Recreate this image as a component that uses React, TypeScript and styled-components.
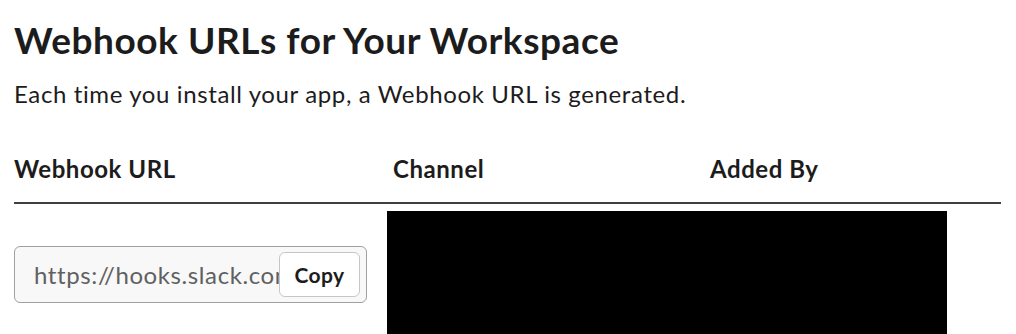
import React from "react";
import styled, { createGlobalStyle } from "styled-components";

const Global = createGlobalStyle`
  html, body { margin: 0; padding: 0; background: #fff; }
  body { font-family: Lato, "Noto Sans", sans-serif; color: #1d1c1d; }
`;

const Page = styled.div`
  padding: 17px 15px 0 14px;
  width: 1016px;
  box-sizing: border-box;
  height: 334px;
  overflow: hidden;
`;

const Title = styled.h1`
  margin: 0;
  font-size: 37px;
  line-height: 45px;
  font-weight: 700;
  letter-spacing: 0.55px;
  white-space: nowrap;
`;

const Subtitle = styled.p`
  margin: 17px 0 0;
  font-size: 24px;
  line-height: 30px;
  font-weight: 400;
  letter-spacing: 0.62px;
  white-space: nowrap;
`;

const HeaderRow = styled.div`
  display: grid;
  grid-template-columns: 379px 317px 1fr;
  margin-top: 45px;
  padding-bottom: 18px;
  border-bottom: 2px solid #404040;
`;

const HeaderCell = styled.div`
  font-size: 24px;
  line-height: 30px;
  font-weight: 700;
  letter-spacing: 0.55px;
  white-space: nowrap;
`;

const DataRow = styled.div`
  display: flex;
  align-items: flex-start;
  margin-top: 7px;
`;

const UrlCell = styled.div`
  width: 373px;
  padding-top: 35px;
`;

const UrlField = styled.div`
  width: 353px;
  height: 57px;
  box-sizing: border-box;
  border: 1px solid #a0a0a0;
  border-radius: 6px;
  background: #f8f8f8;
  display: flex;
  align-items: center;
  padding: 0 6px 0 19px;
  overflow: hidden;
`;

const UrlText = styled.span`
  flex: 1;
  min-width: 0;
  overflow: hidden;
  white-space: nowrap;
  font-size: 24px;
  letter-spacing: 0.6px;
  color: #616061;
`;

const CopyButton = styled.button`
  flex: none;
  width: 81px;
  height: 45px;
  border: 1px solid #c6c6c6;
  border-radius: 6px;
  background: #fff;
  font-family: Lato, "Noto Sans", sans-serif;
  font-size: 21px;
  font-weight: 700;
  letter-spacing: 0.4px;
  color: #1d1c1d;
  padding: 0;
`;

const Redacted = styled.div`
  width: 560px;
  height: 140px;
  background: #000;
`;

export default function App() {
  return (
    <>
      <Global />
      <Page>
        <Title>Webhook URLs for Your Workspace</Title>
        <Subtitle>Each time you install your app, a Webhook URL is generated.</Subtitle>
        <HeaderRow>
          <HeaderCell>Webhook URL</HeaderCell>
          <HeaderCell>Channel</HeaderCell>
          <HeaderCell>Added By</HeaderCell>
        </HeaderRow>
        <DataRow>
          <UrlCell>
            <UrlField>
              <UrlText>https://hooks.slack.com/services/T00000000/B00000000</UrlText>
              <CopyButton>Copy</CopyButton>
            </UrlField>
          </UrlCell>
          <Redacted />
        </DataRow>
      </Page>
    </>
  );
}
